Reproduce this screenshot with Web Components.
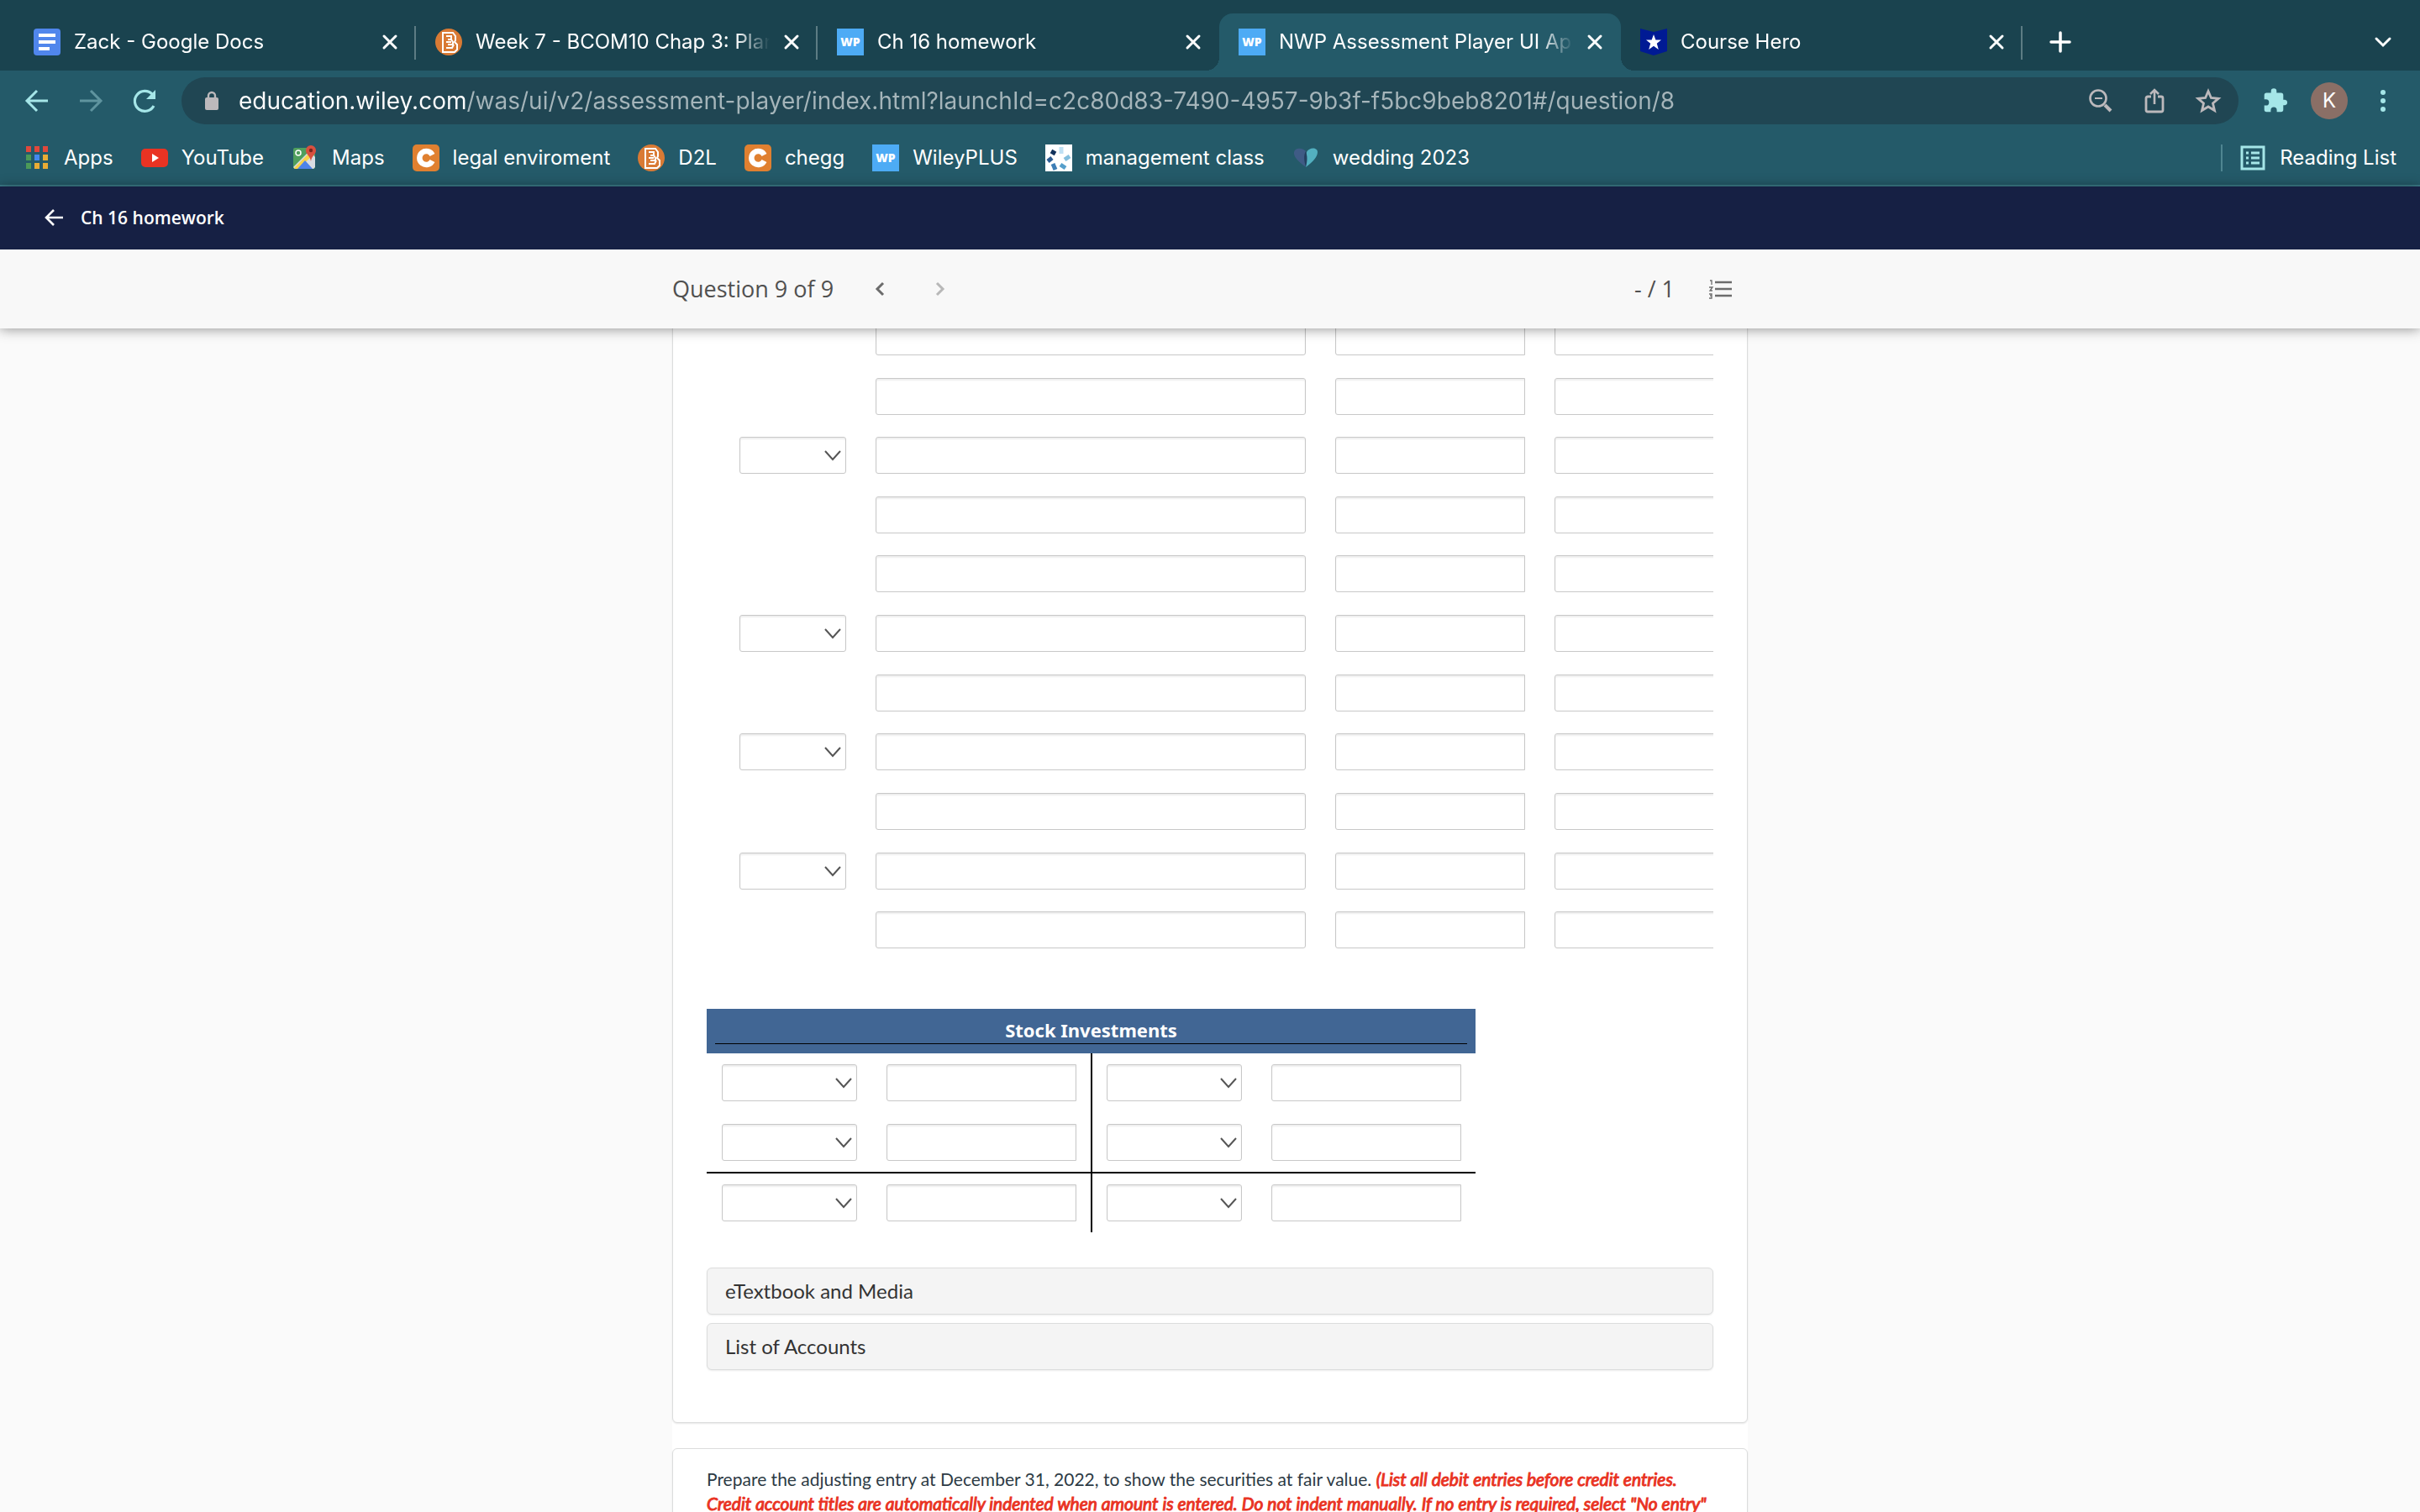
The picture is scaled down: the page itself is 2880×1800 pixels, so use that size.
<!DOCTYPE html>
<html lang="en">
<head>
<meta charset="utf-8">
<title>NWP Assessment Player UI Application</title>
<style>
    html, body {
        height: 100%;
        margin: 0;
    }
    body {
        background: #fafafa;
        overflow: hidden;
    }
</style>
</head>
<body>
<assessment-page></assessment-page>

<script>
const ICONS = {
    docs: `<rect width="32" height="32" rx="4" fill="#5086ec"/><path d="M6 8h20M6 16h20M6 24h13" stroke="#fff" stroke-width="4"/>`,
    bcom: `<circle cx="16" cy="16" r="16" fill="#d97a34"/><path d="M9 5h12l3 4v5l-1 2 3 3v6l-3 3H9zM13 9h6v4h-4M13 16h6M19 13l2 3v3h-6M13 23h7l2-4" fill="none" stroke="#fff" stroke-width="2"/>`,
    wp: `<rect width="32" height="32" fill="#4dabf5"/><text x="16" y="21" text-anchor="middle" font-family="Open Sans, sans-serif" font-weight="800" font-size="14" fill="#fff">WP</text>`,
    hero: `<path d="M0 0l16 4 16-4v27l-16 5-16-5z" fill="#001a94"/><path d="M16 7l2.400 6.600H25l-5.200 4.200L21.800 25 16 20.800 10.200 25l2-7.200L7 13.600h6.600z" fill="#fff"/>`,
    close: `<path d="M9 9l14 14M23 9L9 23" stroke="currentColor" stroke-width="3" stroke-linecap="round"/>`,
    plus: `<path d="M16 5v22M5 16h22" stroke="currentColor" stroke-width="3.500" stroke-linecap="round"/>`,
    down: `<path d="M8 12l8 8 8-8" fill="none" stroke="currentColor" stroke-width="3" stroke-linecap="round"/>`,
    back: `<path d="M29 16H5M16 4L4 16l12 12" fill="none" stroke="currentColor" stroke-width="3"/>`,
    forward: `<path d="M3 16h24M16 4l12 12-12 12" fill="none" stroke="currentColor" stroke-width="3"/>`,
    reload: `<path d="M27 22A12 12 0 1 1 25 8" fill="none" stroke="currentColor" stroke-width="3.200"/><path d="M29 3v11H18z" fill="currentColor"/>`,
    lock: `<rect x="8" y="12" width="16" height="15" rx="2" fill="currentColor"/><path d="M12 13V10a4 4 0 0 1 8 0v3" fill="none" stroke="currentColor" stroke-width="2.400"/>`,
    zoomOut: `<circle cx="13" cy="13" r="9.500" fill="none" stroke="currentColor" stroke-width="2.600"/><path d="M9 13h9" stroke="currentColor" stroke-width="2"/><path d="M21 21l7 7" stroke="currentColor" stroke-width="4"/>`,
    share: `<path d="M12 11H8a2 2 0 0 0-2 2v14a2 2 0 0 0 2 2h16a2 2 0 0 0 2-2V13a2 2 0 0 0-2-2h-4" fill="none" stroke="currentColor" stroke-width="2.800"/><path d="M16 20V4M11 8l5-5 5 5" fill="none" stroke="currentColor" stroke-width="2.600"/>`,
    star: `<path d="M16 4.500l3.400 8 8.700.800-6.600 5.700 2 8.500-7.500-4.500-7.500 4.500 2-8.500-6.600-5.700 8.700-.800z" fill="none" stroke="currentColor" stroke-width="2.800"/>`,
    puzzle: `<path d="M27.300 14.700h-2V9.300a2.700 2.700 0 0 0-2.700-2.700h-5.300v-2a3.300 3.300 0 0 0-6.600 0v2H5.400a2.700 2.700 0 0 0-2.700 2.700v5h2a3.600 3.600 0 0 1 0 7.200h-2v5a2.700 2.700 0 0 0 2.700 2.700h5v-2a3.600 3.600 0 0 1 7.200 0v2h5a2.700 2.700 0 0 0 2.700-2.700v-5.300h2a3.300 3.300 0 0 0 0-6.500z" fill="currentColor"/>`,
    dots: `<g fill="currentColor"><circle cx="16" cy="6" r="3"/><circle cx="16" cy="16" r="3"/><circle cx="16" cy="26" r="3"/></g>`,
    apps: `<g fill="#e0483c"><path d="M3 2h6v7H3zM13 2h6v7h-6zM23 2h6v7h-6z"/></g><path d="M3 12h6v7H3z" fill="#4c9a58"/><path d="M13 12h6v7h-6z" fill="#4489ee"/><path d="M23 12h6v7h-6z" fill="#e9ac35"/><path d="M3 22h6v7H3z" fill="#4c9a58"/><path d="M13 22h6v7h-6zM23 22h6v7h-6z" fill="#e9ac35"/>`,
    youtube: `<rect y="5" width="32" height="22" rx="5" fill="#e93323"/><path d="M13 11l8 5-8 5z" fill="#fff"/>`,
    maps: `<rect x="2" y="4" width="26" height="25" rx="2" fill="#4f9f5d"/><path d="M2 27L22 7l6 8v12l-2 2H4z" fill="#d9dde2"/><path d="M3 28L20 11l4 3L8 29H4z" fill="#f7d34b"/><path d="M7 29l9-10 9 10z" fill="#4d83ea"/><circle cx="8" cy="10" r="3" fill="none" stroke="#fff" stroke-width="1.500"/><path d="M23 1a6 6 0 0 1 6 6c0 5-5 6-6 13-1-7-6-8-6-13a6 6 0 0 1 6-6z" fill="#d8503f"/><circle cx="23" cy="7" r="2.200" fill="#7a2621"/>`,
    chegg: `<rect width="32" height="32" rx="5" fill="#e08030"/><path d="M23.500 12.500A8 8 0 1 0 23.500 19.500" fill="none" stroke="#fff" stroke-width="6.500"/>`,
    flower: `<rect width="32" height="32" fill="#fff"/><g stroke-width="5"><path d="M19 3v8" stroke="#bfe0f3"/><path d="M7 8l5 3" stroke="#12325c"/><path d="M3 20l5-4" stroke="#2c5c93"/><path d="M9 23l3 7" stroke="#3e7eb6"/><path d="M18 24l6 4" stroke="#569fcb"/><path d="M23 18l6-4" stroke="#83bedd"/></g>`,
    heart: `<path d="M16 27C8 21 1 15 2 9c1-5 9-6 14-1z" fill="#3f5b85"/><path d="M16 27c8-6 14-12 14-18 0-6-10-6-13 0-2 5-1 10-1 18z" fill="#53b0c0"/><path d="M16 8c-3 5-2 12 0 19 2-8 2-13 0-19z" fill="#24405f"/>`,
    reading: `<rect x="3" y="3" width="26" height="26" fill="none" stroke="currentColor" stroke-width="3"/><path d="M8 10h3M8 16h3M8 22h3M14 10h10M14 16h10M14 22h10" stroke="currentColor" stroke-width="3"/>`,
    arrowLeft: `<path d="M27 16H7M16 7l-9 9 9 9" fill="none" stroke="currentColor" stroke-width="2.600"/>`,
    prev: `<path d="M19 9l-7 7 7 7" fill="none" stroke="currentColor" stroke-width="3"/>`,
    next: `<path d="M13 9l7 7-7 7" fill="none" stroke="currentColor" stroke-width="3"/>`,
    list: `<path d="M10 8h20M10 16h20M10 24h20" stroke="currentColor" stroke-width="2.600"/><path d="M4 6h2v5M3 14h4l-3 4h3M3 22h3v5H3M4 24h2" fill="none" stroke="currentColor" stroke-width="1.300"/>`,
    caret: `<path d="M7 11l9 10 9-10" fill="none" stroke="currentColor" stroke-width="2"/>`
};

class UiIcon extends HTMLElement {
    connectedCallback() {
        this.attachShadow({mode: "open"}).innerHTML = `
            <style>
                :host {
                    display: block;
                    flex: none;
                    width: 32px;
                    height: 32px;
                }
                svg {
                    display: block;
                }
            </style>
            <svg width="32" height="32" viewBox="0 0 32 32" aria-hidden="true">${ICONS[this.getAttribute("name")]}</svg>
        `;
    }
}

class IconButton extends HTMLElement {
    connectedCallback() {
        this.attachShadow({mode: "open"}).innerHTML = `
            <style>
                :host {
                    display: block;
                    flex: none;
                }
                button {
                    display: block;
                    padding: 0;
                    border: 0;
                    background: none;
                    color: inherit;
                }
            </style>
            <button type="button" aria-label="${this.getAttribute("label")}"><ui-icon name="${this.getAttribute("name")}"></ui-icon></button>
        `;
    }
}

class BrowserTab extends HTMLElement {
    connectedCallback() {
        this.attachShadow({mode: "open"}).innerHTML = `
            <style>
                :host {
                    display: flex;
                    flex: 0 1 478px;
                    min-width: 0;
                    box-sizing: border-box;
                    align-items: center;
                    height: 68px;
                    padding: 0 15px 0 23px;
                    position: relative;
                    color: #fff;
                }
                :host([divider])::after {
                    content: "";
                    position: absolute;
                    right: 0;
                    top: 15px;
                    width: 2px;
                    height: 40px;
                    background: #5d7c84;
                }
                :host([active]) {
                    background: #245a69;
                    border-radius: 16px 16px 0 0;
                }
                :host([active])::before, :host([active])::after {
                    content: "";
                    position: absolute;
                    bottom: 0;
                    width: 16px;
                    height: 16px;
                }
                :host([active])::before {
                    left: -16px;
                    background: radial-gradient(circle at 0 0, transparent 16px, #245a69 16px);
                }
                :host([active])::after {
                    right: -16px;
                    background: radial-gradient(circle at 100% 0, transparent 16px, #245a69 16px);
                }
                .title {
                    flex: 1;
                    min-width: 0;
                    margin: 0 10px 0 16px;
                    overflow: hidden;
                    white-space: nowrap;
                    font-size: 24px;
                    line-height: 32px;
                    -webkit-mask-image: linear-gradient(to left, transparent, #000 40px);
                    mask-image: linear-gradient(to left, transparent, #000 40px);
                }
            </style>
            <ui-icon name="${this.getAttribute("icon")}"></ui-icon>
            <span class="title"><slot></slot></span>
            <icon-button name="close" label="Close tab"></icon-button>
        `;
    }
}

class BookmarkLink extends HTMLElement {
    connectedCallback() {
        this.attachShadow({mode: "open"}).innerHTML = `
            <style>
                :host {
                    display: block;
                    flex: none;
                }
                a {
                    display: flex;
                    align-items: center;
                    gap: 16px;
                    color: #fff;
                    font-size: 24px;
                    line-height: 32px;
                    text-decoration: none;
                    white-space: nowrap;
                }
                ui-icon {
                    color: #a5e6e8;
                }
            </style>
            <a href="#"><ui-icon name="${this.getAttribute("icon")}"></ui-icon><slot></slot></a>
        `;
    }
}

class BrowserChrome extends HTMLElement {
    connectedCallback() {
        this.attachShadow({mode: "open"}).innerHTML = `
            <style>
                :host {
                    display: block;
                    background: #245a69;
                    border-bottom: 2px solid #3b7c89;
                    color: #a5e6e8;
                    font-family: Inter, "Liberation Sans", sans-serif;
                }
                .tabs {
                    display: flex;
                    align-items: center;
                    padding: 16px 28px 0 17px;
                    background: #1a434f;
                    color: #fff;
                }
                .tabs .new {
                    margin-left: 29px;
                }
                .tabs .search {
                    margin-left: auto;
                }
                .bar {
                    display: flex;
                    align-items: center;
                    padding: 8px 28px;
                    gap: 26px;
                }
                .nav {
                    display: flex;
                    gap: 32px;
                }
                .off {
                    color: #5f949f;
                }
                .omnibox {
                    display: flex;
                    flex: 1;
                    min-width: 0;
                    align-items: center;
                    height: 56px;
                    margin: 0 2px;
                    padding: 0 20px;
                    border-radius: 28px;
                    background: #204653;
                    color: #bcb9bc;
                    gap: 32px;
                }
                .omnibox label {
                    display: flex;
                    flex: 1;
                    min-width: 0;
                    align-items: center;
                    gap: 16px;
                }
                input {
                    flex: 1;
                    min-width: 0;
                    padding: 0;
                    border: 0;
                    outline: 0;
                    font: 28px/40px Inter, "Liberation Sans", sans-serif;
                    color: #fff;
                    -webkit-text-fill-color: transparent;
                    background: linear-gradient(to right, #fff 270px, #a5b5ba 270px);
                    -webkit-background-clip: text;
                    background-clip: text;
                }
                .avatar {
                    width: 44px;
                    height: 44px;
                    padding: 0;
                    border: 0;
                    border-radius: 50%;
                    background: #8a6f66;
                    color: #fff;
                    font: 24px/44px Inter, sans-serif;
                }
                .bookmarks {
                    display: flex;
                    align-items: center;
                    height: 64px;
                    padding: 0 28px;
                    gap: 33px;
                }
                .reading {
                    margin-left: auto;
                    padding-left: 20px;
                    border-left: 2px solid #4f8591;
                }
            </style>
            <div class="tabs">
                <browser-tab icon="docs" divider>Zack - Google Docs</browser-tab>
                <browser-tab icon="bcom" divider>Week 7 - BCOM10 Chap 3: Planning</browser-tab>
                <browser-tab icon="wp">Ch 16 homework</browser-tab>
                <browser-tab icon="wp" active>NWP Assessment Player UI Application</browser-tab>
                <browser-tab icon="hero" divider>Course Hero</browser-tab>
                <icon-button class="new" name="plus" label="New tab"></icon-button>
                <icon-button class="search" name="down" label="Search tabs"></icon-button>
            </div>
            <div class="bar">
                <div class="nav">
                    <icon-button name="back" label="Back"></icon-button>
                    <icon-button class="off" name="forward" label="Forward"></icon-button>
                    <icon-button name="reload" label="Reload"></icon-button>
                </div>
                <div class="omnibox">
                    <label>
                        <ui-icon name="lock"></ui-icon>
                        <input type="text" aria-label="Address" value="education.wiley.com/was/ui/v2/assessment-player/index.html?launchId=c2c80d83-7490-4957-9b3f-f5bc9beb8201#/question/8">
                    </label>
                    <icon-button name="zoomOut" label="Zoom"></icon-button>
                    <icon-button name="share" label="Share"></icon-button>
                    <icon-button name="star" label="Bookmark"></icon-button>
                </div>
                <icon-button name="puzzle" label="Extensions"></icon-button>
                <button class="avatar" type="button">K</button>
                <icon-button name="dots" label="Menu"></icon-button>
            </div>
            <div class="bookmarks">
                <bookmark-link icon="apps">Apps</bookmark-link>
                <bookmark-link icon="youtube">YouTube</bookmark-link>
                <bookmark-link icon="maps">Maps</bookmark-link>
                <bookmark-link icon="chegg">legal enviroment</bookmark-link>
                <bookmark-link icon="bcom">D2L</bookmark-link>
                <bookmark-link icon="chegg">chegg</bookmark-link>
                <bookmark-link icon="wp">WileyPLUS</bookmark-link>
                <bookmark-link icon="flower">management class</bookmark-link>
                <bookmark-link icon="heart">wedding 2023</bookmark-link>
                <bookmark-link class="reading" icon="reading">Reading List</bookmark-link>
            </div>
        `;
    }
}

class PlayerHeader extends HTMLElement {
    connectedCallback() {
        this.attachShadow({mode: "open"}).innerHTML = `
            <style>
                :host {
                    display: block;
                    position: relative;
                    z-index: 1;
                    font-family: "Open Sans", "Noto Sans", sans-serif;
                    box-shadow: 0 1px 14px rgba(0, 0, 0, 0.42);
                }
                .course {
                    display: flex;
                    align-items: center;
                    box-sizing: border-box;
                    height: 75px;
                    padding: 0 48px 2px;
                    background: #162044;
                }
                .course a {
                    display: flex;
                    align-items: center;
                    gap: 16px;
                    color: #fff;
                    font-size: 21px;
                    line-height: 32px;
                    font-weight: 600;
                    text-decoration: none;
                }
                .question {
                    background: #f8f8f8;
                }
                .inner {
                    display: flex;
                    align-items: center;
                    box-sizing: border-box;
                    max-width: 1280px;
                    height: 94px;
                    margin: 0 auto;
                    padding: 0 17px 0 0;
                    gap: 38px;
                    color: #505050;
                    font-size: 27px;
                    line-height: 36px;
                }
                .number {
                    margin-right: 2px;
                }
                .score {
                    margin-left: auto;
                }
                icon-button {
                    color: #6c6c6c;
                }
                .off {
                    color: #b8b8b8;
                }
            </style>
            <div class="course"><a href="#"><ui-icon name="arrowLeft"></ui-icon>Ch 16 homework</a></div>
            <div class="question">
                <div class="inner">
                    <span class="number">Question 9 of 9</span>
                    <icon-button name="prev" label="Previous question"></icon-button>
                    <icon-button class="off" name="next" label="Next question"></icon-button>
                    <span class="score">- / 1</span>
                    <icon-button name="list" label="Question list"></icon-button>
                </div>
            </div>
        `;
    }
}

// Text box of an answer; amounts have square corners on the right
class AnswerInput extends HTMLElement {
    connectedCallback() {
        this.attachShadow({mode: "open"}).innerHTML = `
            <style>
                :host {
                    display: block;
                }
                input {
                    display: block;
                    box-sizing: border-box;
                    width: 100%;
                    height: 44px;
                    padding: 0 8px;
                    border: 1px solid #c8c8c8;
                    border-radius: 3px;
                    background: #fff;
                    box-shadow: inset 0 2px 2px rgba(0, 0, 0, 0.07);
                    font: 22px Lato, sans-serif;
                }
                :host([amount]) input {
                    border-radius: 3px 0 0 3px;
                }
            </style>
            <input type="text" aria-label="${this.getAttribute("label")}">
        `;
    }
}

class AnswerSelect extends HTMLElement {
    connectedCallback() {
        this.attachShadow({mode: "open"}).innerHTML = `
            <style>
                :host {
                    display: grid;
                    align-items: center;
                }
                select, ui-icon {
                    grid-area: 1 / 1;
                }
                select {
                    appearance: none;
                    width: 100%;
                    height: 44px;
                    border: 1px solid #c8c8c8;
                    border-radius: 3px;
                    background: #fff;
                    box-shadow: inset 0 2px 2px rgba(0, 0, 0, 0.07);
                }
                ui-icon {
                    justify-self: end;
                    color: #555;
                    pointer-events: none;
                }
            </style>
            <select aria-label="${this.getAttribute("label")}"><option></option></select>
            <ui-icon name="caret"></ui-icon>
        `;
    }
}

class JournalTable extends HTMLElement {
    connectedCallback() {
        // rows that open an entry and so carry the date select
        const dated = [2, 5, 7, 9];
        let rows = "";
        for (let i = 0; i < 11; i++) {
            rows += `
                <tr>
                    <td>${dated.includes(i) ? `<answer-select label="Date"></answer-select>` : ""}</td>
                    <td><answer-input label="Account title"></answer-input></td>
                    <td><answer-input amount label="Debit"></answer-input></td>
                    <td><answer-input amount label="Credit"></answer-input></td>
                </tr>`;
        }
        this.attachShadow({mode: "open"}).innerHTML = `
            <style>
                :host {
                    display: block;
                    overflow: hidden;
                }
                table {
                    width: 1252px;
                    table-layout: fixed;
                    border-collapse: collapse;
                }
                tr {
                    height: 71px;
                }
                tr:nth-child(2), tr:nth-child(3n+4) {
                    height: 70px;
                }
                td {
                    padding: 13px 17px 0 18px;
                    vertical-align: top;
                }
                td:first-child {
                    padding-left: 39px;
                }
            </style>
            <table>
                <colgroup><col style="width: 183px"><col style="width: 547px"><col style="width: 261px"><col style="width: 261px"></colgroup>
                <tbody>${rows}</tbody>
            </table>
        `;
    }
}

class LedgerAccount extends HTMLElement {
    connectedCallback() {
        const row = `
            <tr>
                <td><answer-select label="Debit date"></answer-select></td>
                <td><answer-input amount label="Debit"></answer-input></td>
                <td class="credit"><answer-select label="Credit date"></answer-select></td>
                <td><answer-input amount label="Credit"></answer-input></td>
            </tr>`;
        this.attachShadow({mode: "open"}).innerHTML = `
            <style>
                :host {
                    display: block;
                }
                table {
                    width: 915px;
                    table-layout: fixed;
                    border-collapse: separate;
                    border-spacing: 0;
                }
                th {
                    height: 53px;
                    padding: 0 10px;
                    background: #416694;
                    color: #fff;
                    font: bold 22px/28px "Noto Sans", "DejaVu Sans", sans-serif;
                    box-sizing: border-box;
                }
                th span {
                    display: block;
                    padding-bottom: 2px;
                    border-bottom: 1px solid #000;
                }
                td {
                    padding: 13px 17px 14px 18px;
                }
                .credit {
                    border-left: 2px solid #000;
                    padding-left: 17px;
                }
                tr:nth-child(2) td {
                    padding-bottom: 13px;
                    border-bottom: 2px solid #000;
                }
                tr:nth-child(3) td {
                    padding-bottom: 13px;
                }
            </style>
            <table>
                <colgroup><col style="width: 196px"><col style="width: 261px"><col style="width: 197px"><col style="width: 261px"></colgroup>
                <thead><tr><th colspan="4"><span><slot></slot></span></th></tr></thead>
                <tbody>${row}${row}${row}</tbody>
            </table>
        `;
    }
}

class PanelButton extends HTMLElement {
    connectedCallback() {
        this.attachShadow({mode: "open"}).innerHTML = `
            <style>
                :host {
                    display: block;
                }
                button {
                    display: block;
                    box-sizing: border-box;
                    width: 100%;
                    height: 56px;
                    padding: 0 21px;
                    border: 1px solid #dcdddd;
                    border-radius: 6px;
                    background: #f4f4f4;
                    box-shadow: 0 1px 2px rgba(0, 0, 0, 0.08);
                    color: #333;
                    font: 24px/32px Lato, sans-serif;
                    text-align: left;
                }
            </style>
            <button type="button"><slot></slot></button>
        `;
    }
}

class QuestionCard extends HTMLElement {
    connectedCallback() {
        this.attachShadow({mode: "open"}).innerHTML = `
            <style>
                :host {
                    display: block;
                    border: 1px solid #dcdddd;
                    border-radius: 6px;
                    background: #fff;
                    box-shadow: 0 1px 2px rgba(0, 0, 0, 0.1);
                    padding: 40px 40px 62px;
                }
                :host([text]) {
                    padding-top: 21px;
                }
            </style>
            <slot></slot>
        `;
    }
}

class AssessmentPage extends HTMLElement {
    connectedCallback() {
        this.attachShadow({mode: "open"}).innerHTML = `
            <style>
                :host {
                    display: flex;
                    flex-direction: column;
                    height: 100%;
                }
                browser-chrome, player-header {
                    flex: none;
                }
                main {
                    flex: 1;
                    min-height: 0;
                    overflow: hidden;
                    background: #fafafa;
                }
                .sheet {
                    display: flex;
                    flex-direction: column;
                    gap: 30px;
                    max-width: 1280px;
                    margin: 0 auto;
                    background: #fff;
                }
                ledger-account {
                    margin: 58px 0 42px;
                }
                panel-button + panel-button {
                    margin-top: 10px;
                }
                p {
                    margin: 0;
                    color: #2d3b45;
                    font: 21px/29px Lato, sans-serif;
                }
                em {
                    color: #e93323;
                    -webkit-text-stroke: 1px #e93323;
                }
            </style>
            <browser-chrome></browser-chrome>
            <player-header></player-header>
            <main>
                <div class="sheet">
                    <question-card>
                        <journal-table></journal-table>
                        <ledger-account>Stock Investments</ledger-account>
                        <panel-button>eTextbook and Media</panel-button>
                        <panel-button>List of Accounts</panel-button>
                    </question-card>
                    <question-card text>
                        <p>Prepare the adjusting entry at December 31, 2022, to show the securities at fair value. <em>(List all debit entries before credit entries. Credit account titles are automatically indented when amount is entered. Do not indent manually. If no entry is required, select "No entry"</em></p>
                    </question-card>
                </div>
            </main>
        `;
        // the reader has scrolled past the head of the journal
        requestAnimationFrame(() => {
            this.shadowRoot.querySelector("main").scrollTop = 66;
        });
    }
}

customElements.define("ui-icon", UiIcon);
customElements.define("icon-button", IconButton);
customElements.define("browser-tab", BrowserTab);
customElements.define("bookmark-link", BookmarkLink);
customElements.define("browser-chrome", BrowserChrome);
customElements.define("player-header", PlayerHeader);
customElements.define("answer-input", AnswerInput);
customElements.define("answer-select", AnswerSelect);
customElements.define("journal-table", JournalTable);
customElements.define("ledger-account", LedgerAccount);
customElements.define("panel-button", PanelButton);
customElements.define("question-card", QuestionCard);
customElements.define("assessment-page", AssessmentPage);
</script>
</body>
</html>
